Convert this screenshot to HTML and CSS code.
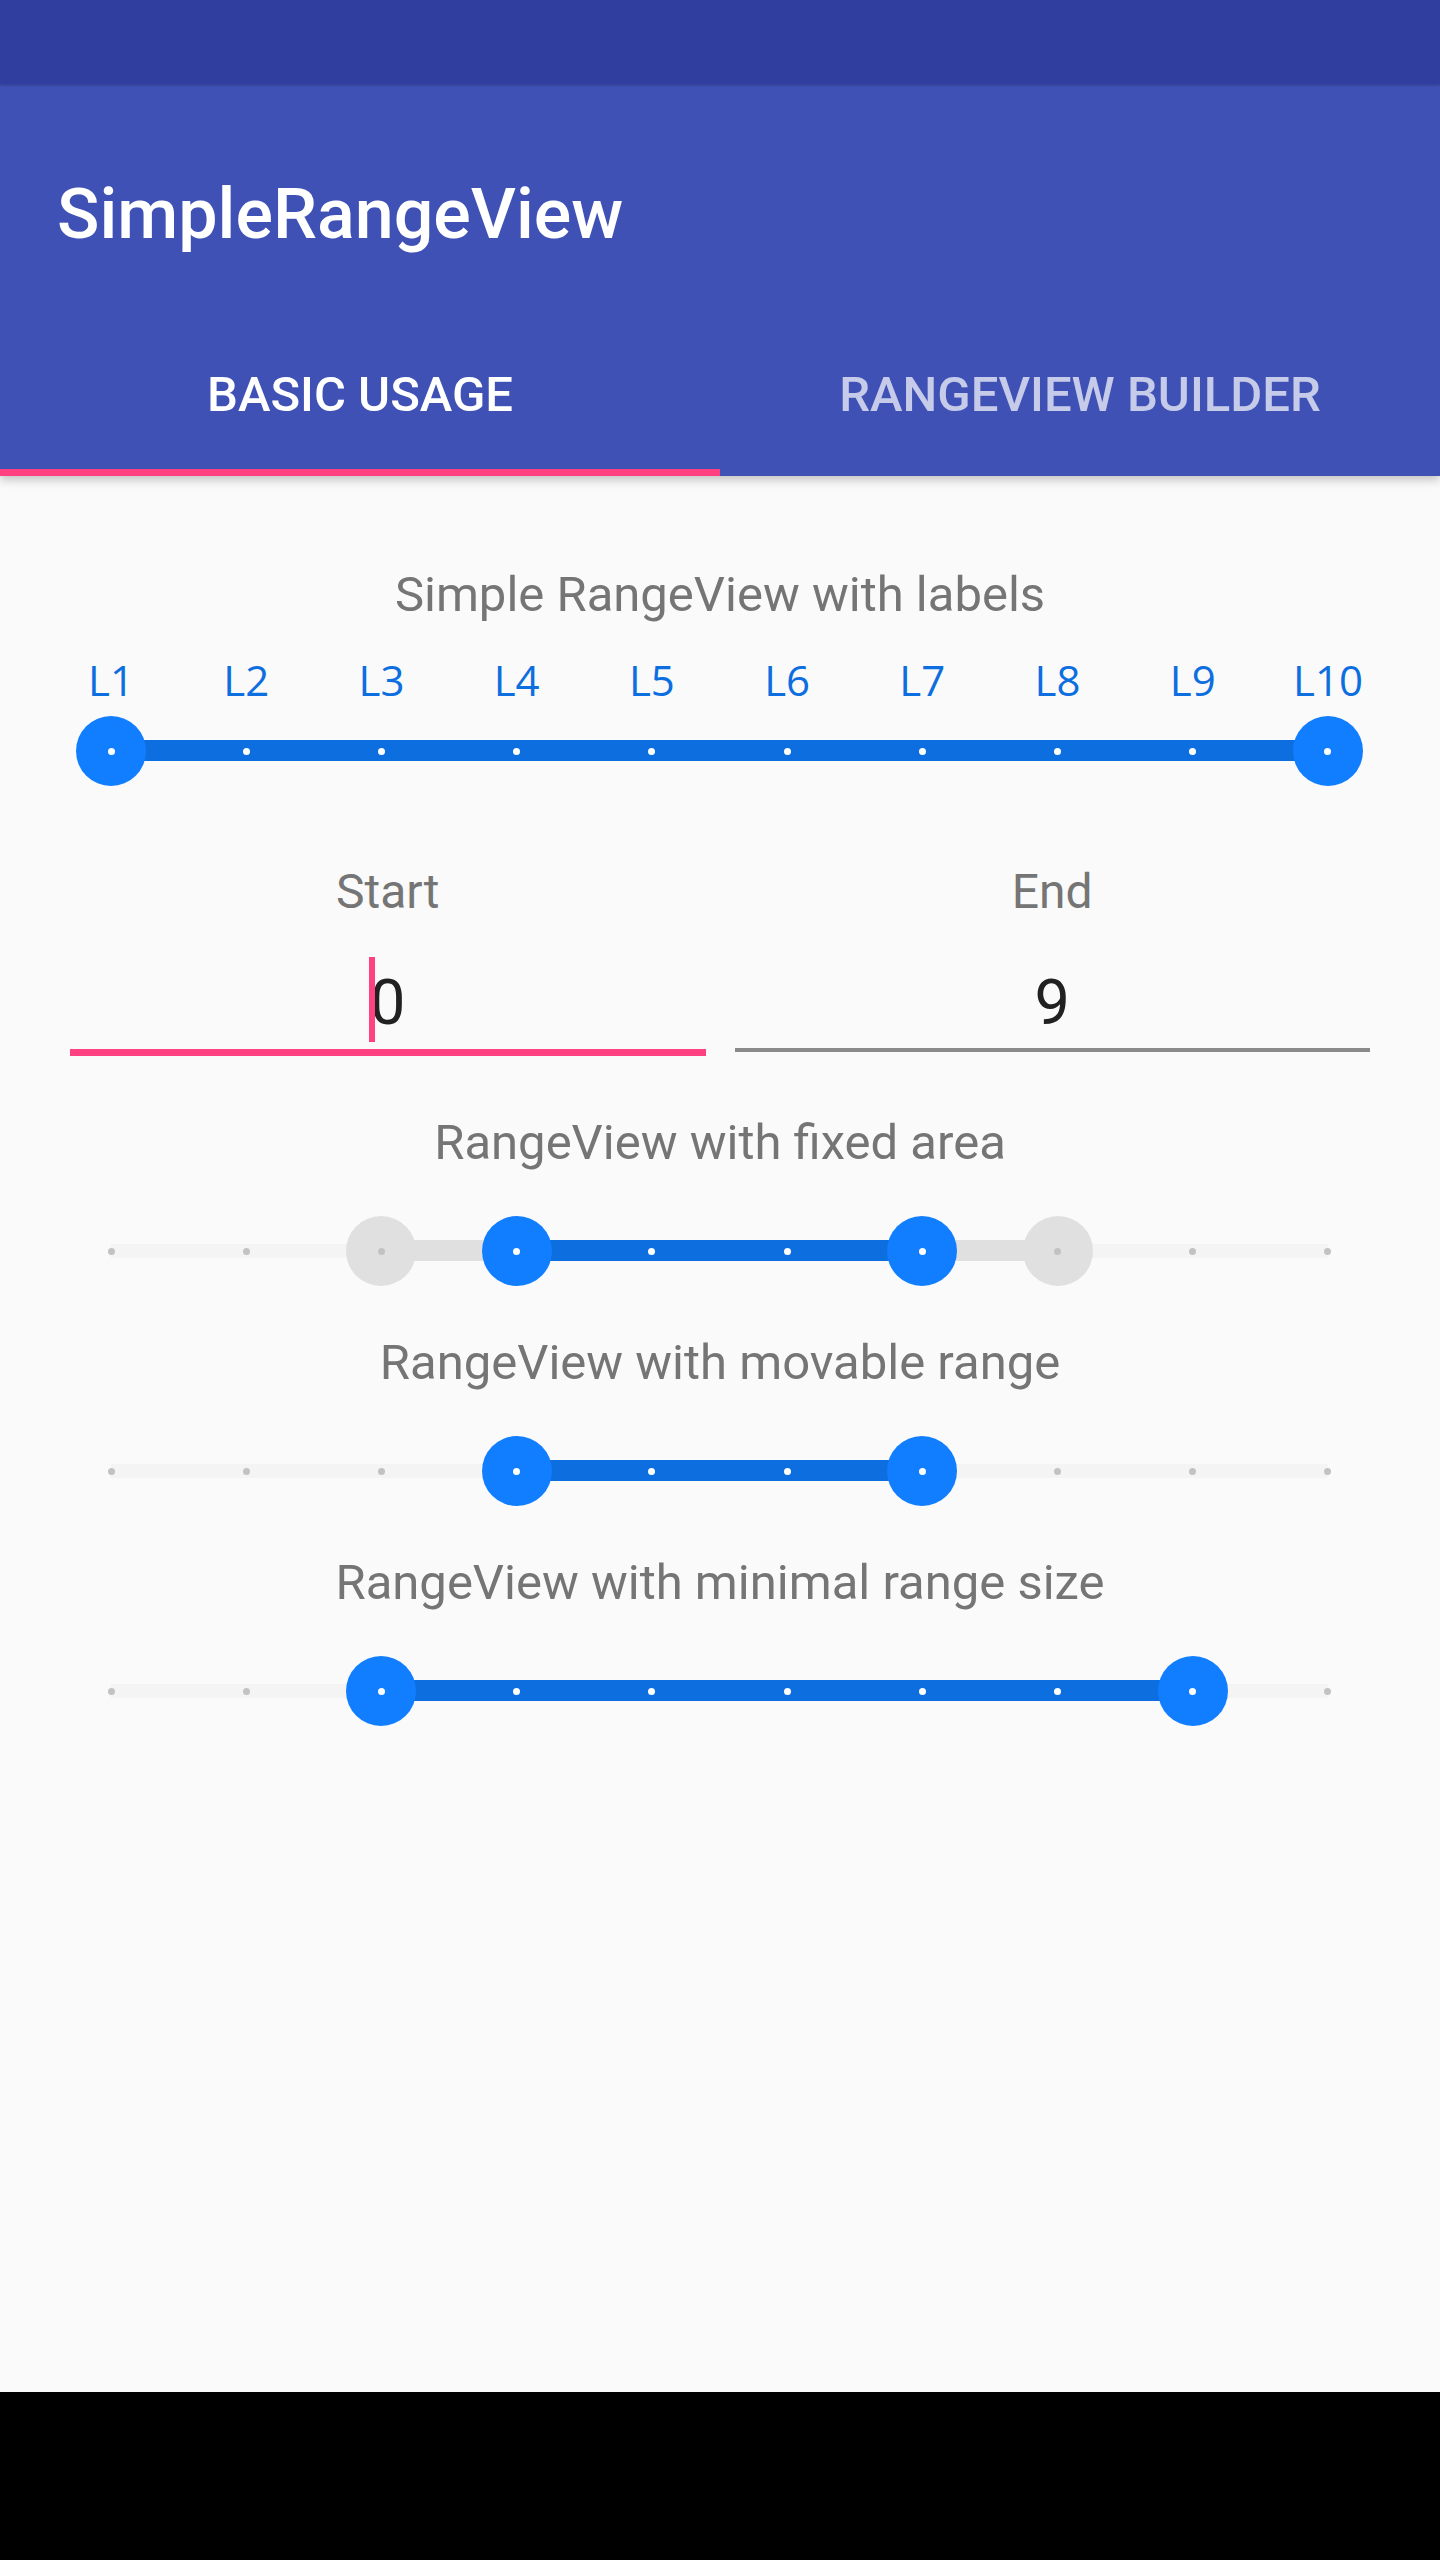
FILE: index.html
```html
<!DOCTYPE html>
<html lang="en">
<head>
<meta charset="utf-8">
<title>SimpleRangeView</title>
<link rel="stylesheet" href="styles.css">
</head>
<body>
<div class="screen">
  <div class="status-bar"></div>
  <header class="appbar">
    <div class="toolbar"><h1 class="title">SimpleRangeView</h1></div>
    <nav class="tabs">
      <div class="tab active">BASIC USAGE</div>
      <div class="tab">RANGEVIEW BUILDER</div>
    </nav>
  </header>

  <main class="content">
    <section class="section first">
      <h2 class="heading">Simple RangeView with labels</h2>
      <div class="labels">
        <span>L1</span><span>L2</span><span>L3</span><span>L4</span><span>L5</span>
        <span>L6</span><span>L7</span><span>L8</span><span>L9</span><span>L10</span>
      </div>
      <div class="range labeled">
        <div class="fill active" style="left:0%;width:100%"></div>
        <div class="thumb" style="left:0%"></div>
        <div class="thumb" style="left:100%"></div>
        <div class="ticks"><i class="on"></i><i class="on"></i><i class="on"></i><i class="on"></i><i class="on"></i><i class="on"></i><i class="on"></i><i class="on"></i><i class="on"></i><i class="on"></i></div>
      </div>
    </section>

    <section class="fields">
      <div class="field">
        <div class="field-label">Start</div>
        <div class="field-value"><span class="val-text"><span class="caret"></span>0</span></div>
        <div class="field-line focused"></div>
      </div>
      <div class="field">
        <div class="field-label">End</div>
        <div class="field-value"><span class="val-text">9</span></div>
        <div class="field-line"></div>
      </div>
    </section>

    <section class="section after-fields">
      <h2 class="heading">RangeView with fixed area</h2>
      <div class="range">
        <div class="rail"></div>
        <div class="fill fixed" style="left:22.222%;width:55.556%"></div>
        <div class="fill active" style="left:33.333%;width:33.333%"></div>
        <div class="thumb ghost" style="left:22.222%"></div>
        <div class="thumb ghost" style="left:77.778%"></div>
        <div class="thumb" style="left:33.333%"></div>
        <div class="thumb" style="left:66.667%"></div>
        <div class="ticks"><i></i><i></i><i></i><i class="on"></i><i class="on"></i><i class="on"></i><i class="on"></i><i></i><i></i><i></i></div>
      </div>
    </section>

    <section class="section">
      <h2 class="heading">RangeView with movable range</h2>
      <div class="range">
        <div class="rail"></div>
        <div class="fill active" style="left:33.333%;width:33.333%"></div>
        <div class="thumb" style="left:33.333%"></div>
        <div class="thumb" style="left:66.667%"></div>
        <div class="ticks"><i></i><i></i><i></i><i class="on"></i><i class="on"></i><i class="on"></i><i class="on"></i><i></i><i></i><i></i></div>
      </div>
    </section>

    <section class="section">
      <h2 class="heading">RangeView with minimal range size</h2>
      <div class="range">
        <div class="rail"></div>
        <div class="fill active" style="left:22.222%;width:66.667%"></div>
        <div class="thumb" style="left:22.222%"></div>
        <div class="thumb" style="left:88.889%"></div>
        <div class="ticks"><i></i><i></i><i class="on"></i><i class="on"></i><i class="on"></i><i class="on"></i><i class="on"></i><i class="on"></i><i class="on"></i><i></i></div>
      </div>
    </section>
  </main>

  <div class="nav-bar"></div>
</div>
</body>
</html>
```

FILE: styles.css
```css
* { box-sizing: border-box; }

html, body {
  margin: 0;
  padding: 0;
  background: #fafafa;
}

body {
  font-family: Roboto, "Liberation Sans", sans-serif;
}

.screen {
  width: 1440px;
  height: 2560px;
  display: flex;
  flex-direction: column;
  overflow: hidden;
}

.status-bar {
  height: 84px;
  flex: none;
  background: #303f9f;
  position: relative;
  z-index: 3;
  box-shadow: 0 1px 3px rgba(0, 0, 0, 0.25);
}

.appbar {
  height: 392px;
  flex: none;
  background: #3f51b5;
  position: relative;
  z-index: 2;
  box-shadow: 0 4px 9px rgba(0, 0, 0, 0.22);
}

.toolbar {
  height: 224px;
  padding: 89px 0 0 57px;
}

.title {
  margin: 0;
  font-family: Roboto, "Liberation Sans", sans-serif;
  font-weight: 500;
  font-size: 70px;
  line-height: 82px;
  color: #ffffff;
}

.tabs {
  height: 168px;
  display: grid;
  grid-template-columns: 1fr 1fr;
}

.tab {
  height: 168px;
  padding-top: 58px;
  text-align: center;
  font-family: Roboto, "Liberation Sans", sans-serif;
  font-weight: 500;
  font-size: 49px;
  line-height: 57px;
  color: rgba(255, 255, 255, 0.7);
}

.tab.active {
  color: #ffffff;
  border-bottom: 7px solid #ff4081;
}

.content {
  flex: 1;
  background: #fafafa;
  padding-top: 89px;
}

.nav-bar {
  height: 168px;
  flex: none;
  background: #000000;
}

.heading {
  margin: 0;
  font-family: Roboto, "Liberation Sans", sans-serif;
  font-weight: 400;
  font-size: 49px;
  line-height: 60px;
  color: #757575;
  text-align: center;
}

.section {
  margin-top: 47px;
}

.section.first {
  margin-top: 0;
}

.section.after-fields {
  margin-top: 57px;
}

.labels {
  margin: 30px 112px 0 111px;
  height: 50px;
  display: flex;
  justify-content: space-between;
}

.labels span {
  width: 0;
  display: flex;
  justify-content: center;
  white-space: nowrap;
  font-family: "Open Sans", "DejaVu Sans", sans-serif;
  font-size: 42px;
  line-height: 50px;
  color: #0d6ee0;
}

.range {
  position: relative;
  height: 70px;
  margin: 43px 112px 0 111px;
}

.range.labeled {
  margin-top: 11px;
}

.rail {
  position: absolute;
  left: 0;
  right: 0;
  top: 28px;
  height: 14px;
  background: #f4f4f4;
}

.fill {
  position: absolute;
  top: 24px;
  height: 21px;
}

.fill.active {
  background: #0d6ee0;
}

.fill.fixed {
  background: #e0e0e0;
}

.thumb {
  position: absolute;
  top: 0;
  width: 70px;
  height: 70px;
  margin-left: -35px;
  border-radius: 50%;
  background: #107eff;
}

.thumb.ghost {
  background: #e0e0e0;
}

.ticks {
  position: absolute;
  top: 0;
  bottom: 0;
  left: -3.5px;
  right: -3.5px;
  display: flex;
  justify-content: space-between;
  align-items: center;
}

.ticks i {
  width: 7px;
  height: 7px;
  border-radius: 50%;
  background: #c2c2c2;
}

.ticks i.on {
  background: #ffffff;
}

.fields {
  margin-top: 76px;
  padding: 0 70px;
  display: grid;
  grid-template-columns: 1fr 1fr;
  column-gap: 29px;
}

.field-label {
  font-family: Roboto, "Liberation Sans", sans-serif;
  font-size: 48px;
  line-height: 60px;
  color: #757575;
  text-align: center;
}

.field-value {
  margin-top: 41px;
  font-family: Roboto, "Liberation Sans", sans-serif;
  font-size: 63px;
  line-height: 80px;
  color: #212121;
  text-align: center;
}

.val-text {
  position: relative;
}

.caret {
  position: absolute;
  left: -1px;
  top: -9px;
  width: 6px;
  height: 85px;
  background: #ff4081;
}

.field-line {
  margin-top: 5px;
  height: 4px;
  background: #8a8a8a;
}

.field-line.focused {
  margin-top: 6px;
  height: 7px;
  background: #ff4081;
}
```
